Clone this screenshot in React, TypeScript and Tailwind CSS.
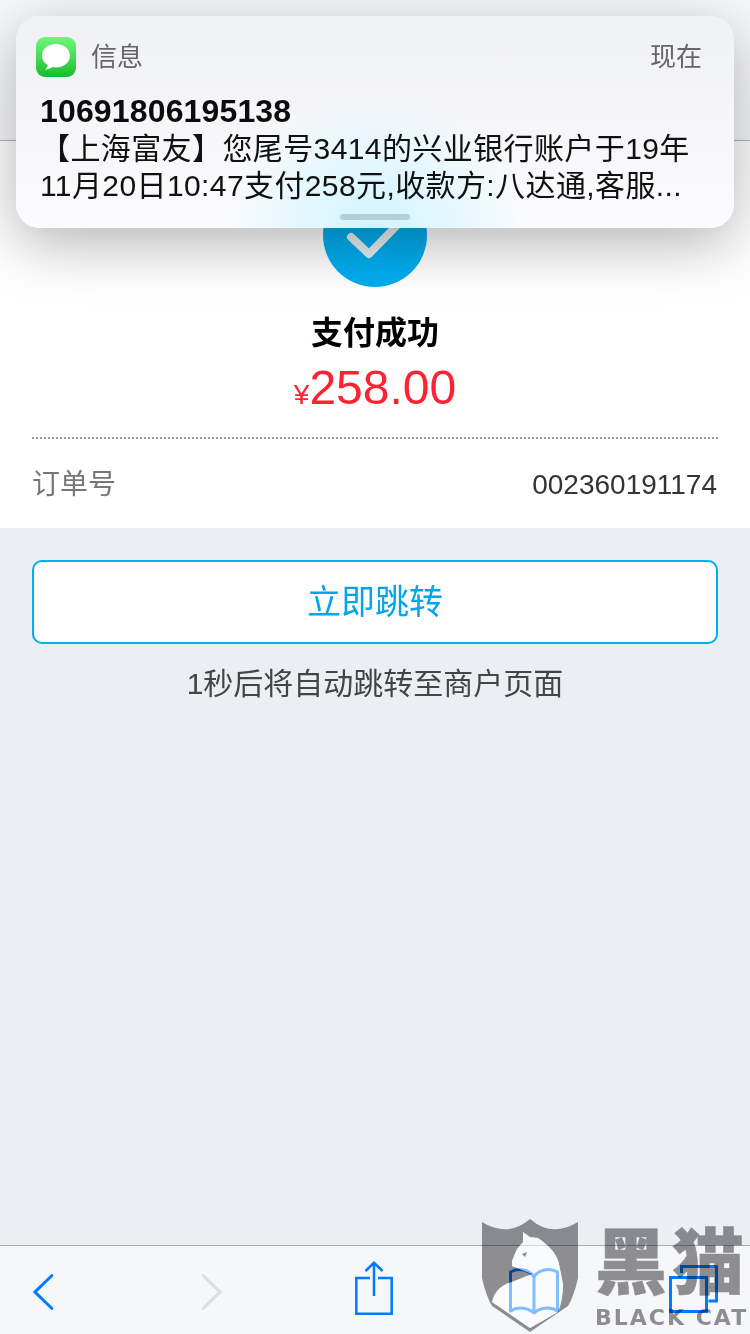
const font = "font-['Liberation_Sans','Noto_Sans_CJK_SC',sans-serif]";

function MessagesIcon() {
    return (
        <div className="h-10 w-10 rounded-[9px] bg-gradient-to-b from-[#6df77c] to-[#0fbd2c]">
            <svg width="40" height="40" viewBox="0 0 40 40">
                <path d="M20 7C12 7 6 12 6 18.500c0 4 2.300 7.500 5.800 9.600-.3 1.700-1.200 3.400-2.700 4.600 3-.1 5.600-1.300 7.300-2.600 1.100.2 2.300.4 3.600.4 8 0 14-5.500 14-12S28 7 20 7z" fill="#fff" />
            </svg>
        </div>
    );
}

function Notification() {
    return (
        <div className="absolute left-4 top-4 h-[212px] w-[718px] overflow-hidden rounded-[24px] bg-gradient-to-b from-[#f0f1f5] to-[#fbfbfd] shadow-[0_15px_60px_rgba(0,0,0,0.3)]">
            <div className="absolute bottom-[-130px] left-[209px] h-[260px] w-[300px] rounded-full bg-[radial-gradient(closest-side,#d2f3ff_0%,#e2f7ff_45%,rgba(240,250,255,0)_100%)]" />
            <div className="relative px-5 pt-[21px]">
                <div className="flex items-center justify-between pr-[12px]">
                    <div className="flex items-center gap-[15px]">
                        <MessagesIcon />
                        <span className="text-[26px] leading-8 text-[#666669]">信息</span>
                    </div>
                    <span className="text-[26px] leading-8 text-[#666669]">现在</span>
                </div>
                <div className="mt-[15px] pl-1 text-[32px] font-bold leading-[38px] tracking-[0.15px] text-[#0c0c0c]">10691806195138</div>
                <div className="whitespace-nowrap pl-1 text-[30px] leading-[37px] tracking-[0.4px] text-[#111]">
                    <div>【上海富友】您尾号3414的兴业银行账户于19年</div>
                    <div>11月20日10:47支付258元,收款方:八达通,客服...</div>
                </div>
            </div>
            <div className="absolute bottom-[8px] left-[324px] h-[6px] w-[70px] rounded-full bg-[#b4cfd8]" />
        </div>
    );
}

function CheckBadge() {
    return (
        <div className="flex h-[104px] w-[104px] items-center justify-center rounded-full bg-[#00adef]">
            <svg width="60" height="52" viewBox="0 0 60 52" fill="none">
                <path d="M6 28l18 17L60 8" stroke="#e8eef2" strokeWidth="8" strokeLinejoin="round" strokeLinecap="round" />
            </svg>
        </div>
    );
}

function Toolbar() {
    return (
        <div className="flex h-[89px] items-center border-t border-[#a9a9ad] bg-[#f5f7f9]">
            <svg className="ml-[33px] mt-[3px]" width="20" height="36" viewBox="0 0 20 36" fill="none">
                <path d="M19 1.500L2 18l17 16.500" stroke="#007aff" strokeWidth="3" strokeLinecap="round" />
            </svg>
            <svg className="ml-[149px] mt-[3px]" width="20" height="36" viewBox="0 0 20 36" fill="none">
                <path d="M1 1.500L18 18 1 34.500" stroke="#dcdde0" strokeWidth="3" strokeLinecap="round" />
            </svg>
            <svg className="ml-[133px] -mt-[5px]" width="38" height="54" viewBox="0 0 38 54" fill="none" stroke="#007aff" strokeWidth="2.500">
                <path d="M15 17H1.300v35.700h35.400V17H23" />
                <path d="M19 35V2M10.500 10L19 1.800 27.500 10" />
            </svg>
            <svg className="ml-[116px] mt-[1px]" width="50" height="48" viewBox="0 0 50 48" fill="none" stroke="#007aff" strokeWidth="3" strokeLinejoin="round">
                <path d="M25 10C21 3 10 0 1.500 5v39c8-5 18-3 23.500 2C30 41 41 39 48.500 44V5C40 0 29 3 25 10zV46" />
            </svg>
            <svg className="ml-[110px] -mt-[2px]" width="49" height="48" viewBox="0 0 49 48" fill="none" stroke="#007aff" strokeWidth="3">
                <path d="M12.500 8V1.500h35V36h-8" />
                <path d="M1.500 12.500h36v34h-36z" />
            </svg>
        </div>
    );
}

const catShape =
    "M43 14L50 19L58 20Q76 32 79 46L83 66Q83 82 78 94L50 110L12 84Q14 76 18 72Q24 66 32 64L52 56L32 48V43L37 31L43 24Z";

function Watermark() {
    return (
        <div className="pointer-events-none absolute bottom-0 left-[480px] flex h-[116px] w-[270px] items-start">
            <svg width="100" height="116" viewBox="0 0 100 116" className="relative">
                <path
                    className="mix-blend-multiply"
                    fillRule="evenodd"
                    fill="#949396"
                    d={`M2 4Q28 20 50 1Q72 20 98 4L98 60Q94 78 88 88L50 114L12 88Q6 78 2 60Z${catShape}`}
                />
                <path fill="#ffffff" fillOpacity="0.5" d={catShape} />
                <path fill="#88878a" d="M42 36l5-2-2 5z" />
            </svg>
            <div className={`${font} ml-[15px] mt-[7px] text-[#949396] mix-blend-multiply`}>
                <div className="whitespace-nowrap text-[72px] font-black leading-[76px] tracking-[5px] [-webkit-text-stroke:0.5px_#949396]">黑猫</div>
                <div className="mt-[6px] whitespace-nowrap font-['DejaVu_Sans',sans-serif] text-[22px] font-bold leading-[22px] tracking-[2px]">BLACK CAT</div>
            </div>
        </div>
    );
}

export default function App() {
    return (
        <div className={`${font} relative flex h-[1334px] w-[750px] flex-col overflow-hidden bg-[#ebeff4]`}>
            <div className="h-[141px] border-b border-[#b2b2b8] bg-[#f7f8fa]" />
            <div className="flex h-[387px] flex-col items-center bg-white">
                <div className="mt-[42px]">
                    <CheckBadge />
                </div>
                <div className="mt-[24px] text-[32px] font-bold leading-[44px] text-black">支付成功</div>
                <div className="mt-[7px] flex items-baseline text-[#ff2233]">
                    <span className="text-[28px] leading-[52px]">¥</span>
                    <span className="text-[48px] leading-[52px]">258.00</span>
                </div>
                <div className="mx-8 mt-[16px] w-[686px] border-t-2 border-dotted border-[#999]" />
                <div className="mt-[26px] flex w-[686px] items-center justify-between text-[28px] leading-[40px]">
                    <span className="text-[#777]">订单号</span>
                    <span className="pr-px text-[#333]">002360191174</span>
                </div>
            </div>
            <div className="flex flex-1 flex-col px-8 pt-8">
                <button className="h-[84px] rounded-[10px] border-2 border-[#00adef] bg-white text-[34px] text-[#00a5ec]">立即跳转</button>
                <div className="mt-[20px] text-center text-[30px] leading-[40px] text-[#444]">1秒后将自动跳转至商户页面</div>
            </div>
            <Toolbar />
            <Watermark />
            <Notification />
        </div>
    );
}
